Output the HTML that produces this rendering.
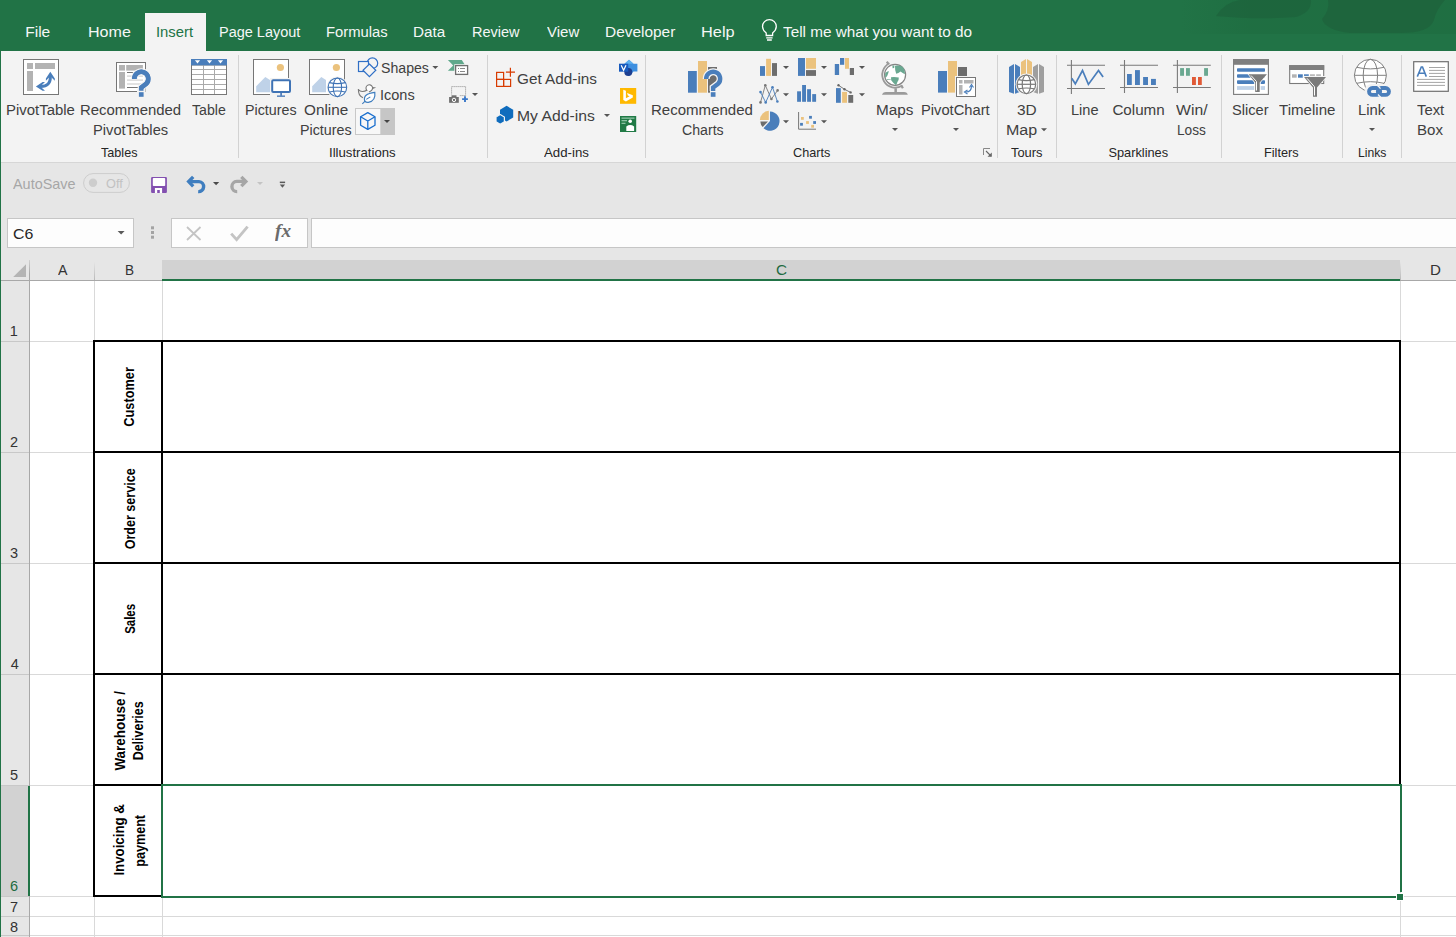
<!DOCTYPE html>
<html><head><meta charset="utf-8"><style>
html,body{margin:0;padding:0}
body{width:1456px;height:937px;overflow:hidden;position:relative;background:#fff;font-family:"Liberation Sans",sans-serif}
.t{position:absolute;white-space:nowrap;line-height:1;transform-origin:0 0}
</style></head><body>
<div style="position:absolute;left:0px;top:0px;width:1456px;height:51px;background:#217346;"></div>
<div style="position:absolute;left:0px;top:51px;width:1456px;height:111px;background:#f3f3f3;"></div>
<div style="position:absolute;left:0px;top:162px;width:1456px;height:1px;background:#d6d6d6;"></div>
<div style="position:absolute;left:0px;top:163px;width:1456px;height:97px;background:#e6e6e6;"></div>
<div style="position:absolute;left:145px;top:13px;width:61px;height:38px;background:#f3f3f3;"></div>
<div style="position:absolute;left:0px;top:260px;width:1456px;height:20px;background:#e6e6e6;"></div>
<div style="position:absolute;left:30px;top:281px;width:1426px;height:656px;background:#ffffff;"></div>
<div style="position:absolute;left:1px;top:281px;width:28px;height:656px;background:#e6e6e6;"></div>
<div style="position:absolute;left:1px;top:786px;width:27px;height:110px;background:#d2d2d2;"></div>
<div style="position:absolute;left:1px;top:341px;width:28px;height:1px;background:#c8c8c8;"></div>
<div style="position:absolute;left:30px;top:341px;width:1426px;height:1px;background:#d9d9d9;"></div>
<div style="position:absolute;left:1px;top:452px;width:28px;height:1px;background:#c8c8c8;"></div>
<div style="position:absolute;left:30px;top:452px;width:1426px;height:1px;background:#d9d9d9;"></div>
<div style="position:absolute;left:1px;top:563px;width:28px;height:1px;background:#c8c8c8;"></div>
<div style="position:absolute;left:30px;top:563px;width:1426px;height:1px;background:#d9d9d9;"></div>
<div style="position:absolute;left:1px;top:674px;width:28px;height:1px;background:#c8c8c8;"></div>
<div style="position:absolute;left:30px;top:674px;width:1426px;height:1px;background:#d9d9d9;"></div>
<div style="position:absolute;left:1px;top:785px;width:28px;height:1px;background:#c8c8c8;"></div>
<div style="position:absolute;left:30px;top:785px;width:1426px;height:1px;background:#d9d9d9;"></div>
<div style="position:absolute;left:1px;top:896px;width:28px;height:1px;background:#c8c8c8;"></div>
<div style="position:absolute;left:30px;top:896px;width:1426px;height:1px;background:#d9d9d9;"></div>
<div style="position:absolute;left:1px;top:916px;width:28px;height:1px;background:#c8c8c8;"></div>
<div style="position:absolute;left:30px;top:916px;width:1426px;height:1px;background:#d9d9d9;"></div>
<div style="position:absolute;left:1px;top:935px;width:28px;height:1px;background:#c8c8c8;"></div>
<div style="position:absolute;left:30px;top:935px;width:1426px;height:1px;background:#d9d9d9;"></div>
<div style="position:absolute;left:94px;top:281px;width:1px;height:656px;background:#d9d9d9;"></div>
<div style="position:absolute;left:162px;top:281px;width:1px;height:656px;background:#d9d9d9;"></div>
<div style="position:absolute;left:1400px;top:281px;width:1px;height:656px;background:#d9d9d9;"></div>
<div style="position:absolute;left:94px;top:262px;width:1px;height:18px;background:linear-gradient(#e6e6e6,#b9b9b9);"></div>
<div style="position:absolute;left:1400px;top:262px;width:1px;height:18px;background:linear-gradient(#e6e6e6,#b9b9b9);"></div>
<div style="position:absolute;left:162px;top:260px;width:1238px;height:19px;background:#d2d2d2;"></div>
<div style="position:absolute;left:162px;top:279px;width:1238px;height:2px;background:#217346;"></div>
<div style="position:absolute;left:29px;top:260px;width:1px;height:677px;background:linear-gradient(#d0d0d0 0px,#a8a8a8 14px,#a8a8a8 100%);"></div>
<div style="position:absolute;left:1px;top:280px;width:161px;height:1px;background:#a8a8a8;"></div>
<div style="position:absolute;left:1400px;top:280px;width:56px;height:1px;background:#a8a8a8;"></div>
<div style="position:absolute;left:28px;top:786px;width:2px;height:110px;background:#217346;"></div>
<div style="position:absolute;left:93px;top:340px;width:1308px;height:2px;background:#000;"></div>
<div style="position:absolute;left:93px;top:451px;width:1308px;height:2px;background:#000;"></div>
<div style="position:absolute;left:93px;top:562px;width:1308px;height:2px;background:#000;"></div>
<div style="position:absolute;left:93px;top:673px;width:1308px;height:2px;background:#000;"></div>
<div style="position:absolute;left:93px;top:784px;width:1308px;height:2px;background:#000;"></div>
<div style="position:absolute;left:93px;top:895px;width:70px;height:2px;background:#000;"></div>
<div style="position:absolute;left:93px;top:340px;width:2px;height:557px;background:#000;"></div>
<div style="position:absolute;left:161px;top:340px;width:2px;height:446px;background:#000;"></div>
<div style="position:absolute;left:1399px;top:340px;width:2px;height:446px;background:#000;"></div>
<div style="position:absolute;left:93px;top:895px;width:70px;height:2px;background:#000;"></div>
<div style="position:absolute;left:161px;top:784px;width:1241px;height:2px;background:#217346;"></div>
<div style="position:absolute;left:161px;top:784px;width:2px;height:114px;background:#217346;"></div>
<div style="position:absolute;left:1400px;top:784px;width:2px;height:108px;background:#217346;"></div>
<div style="position:absolute;left:161px;top:896px;width:1235px;height:2px;background:#217346;"></div>
<div style="position:absolute;left:1396px;top:893px;width:8px;height:8px;background:#ffffff;"></div>
<div style="position:absolute;left:1397px;top:894px;width:6px;height:6px;background:#217346;"></div>
<div style="position:absolute;left:0px;top:51px;width:1px;height:886px;background:#217346;"></div>
<svg style="position:absolute;left:0;top:0" width="1456" height="260"><rect x="238" y="55" width="1" height="103" fill="#d2d2d2"/><rect x="487" y="55" width="1" height="103" fill="#d2d2d2"/><rect x="645" y="55" width="1" height="103" fill="#d2d2d2"/><rect x="997" y="55" width="1" height="103" fill="#d2d2d2"/><rect x="1056" y="55" width="1" height="103" fill="#d2d2d2"/><rect x="1221" y="55" width="1" height="103" fill="#d2d2d2"/><rect x="1342" y="55" width="1" height="103" fill="#d2d2d2"/><rect x="1401" y="55" width="1" height="103" fill="#d2d2d2"/><rect x="23.5" y="59.5" width="35" height="35" fill="#fff" stroke="#767676"/>
<rect x="27" y="63" width="6" height="6" fill="#b3b3b3"/><rect x="35" y="63" width="20" height="6" fill="#b3b3b3"/><rect x="27" y="71" width="6" height="20" fill="#b3b3b3"/>
<path d="M50.3 76 Q51 86.8 40 86.4" fill="none" stroke="#4a7ebb" stroke-width="3"/>
<path d="M45.9 78.5 L50.3 71.8 L54.8 78.5 L54.8 80.8 L50.3 76.3 L45.9 80.8 Z" fill="#4a7ebb"/>
<path d="M42.6 81.9 L35.9 86.4 L42.6 90.8 L45 90.8 L40.3 86.4 L45 81.9 Z" fill="#4a7ebb"/><rect x="116.5" y="62.5" width="29" height="29" fill="#fff" stroke="#767676"/>
<rect x="119" y="65" width="6" height="5.6" fill="#b3b3b3"/><rect x="126.2" y="65" width="16.7" height="5.6" fill="#b3b3b3"/><rect x="119" y="72" width="6" height="16.6" fill="#b3b3b3"/>
<rect x="127" y="72" width="16" height="1" fill="#777"/><rect x="127" y="75.5" width="16" height="1.2" fill="#d0d0d0"/><rect x="127" y="79.5" width="16" height="1.2" fill="#d0d0d0"/><rect x="127" y="83.4" width="16" height="1.2" fill="#d0d0d0"/><rect x="127" y="87" width="11" height="1" fill="#777"/>
<path d="M134.3 79 A7 7 0 1 1 146.2 83.8 L141.2 87.6 L141.2 91" fill="none" stroke="#f3f3f3" stroke-width="7"/>
<path d="M134.3 79 A7 7 0 1 1 146.2 83.8 L141.2 87.6 L141.2 91" fill="none" stroke="#4a7ebb" stroke-width="4.4"/>
<rect x="137" y="89" width="8.6" height="9.8" fill="#f3f3f3"/>
<path d="M134.3 79 A7 7 0 1 1 146.2 83.8 L141.2 87.6 L141.2 90.8" fill="none" stroke="#4a7ebb" stroke-width="4.6"/>
<rect x="138.9" y="92.2" width="4.7" height="4.6" fill="#4a7ebb"/><rect x="191.5" y="65" width="35" height="29.5" fill="#fff" stroke="#777"/>
<g stroke="#aaa" stroke-width="1"><line x1="192" x2="226" y1="69.5" y2="69.5"/><line x1="192" x2="226" y1="74.5" y2="74.5"/><line x1="192" x2="226" y1="79.5" y2="79.5"/><line x1="192" x2="226" y1="84.5" y2="84.5"/><line x1="192" x2="226" y1="89.5" y2="89.5"/><line x1="203.5" x2="203.5" y1="65" y2="94"/><line x1="214.5" x2="214.5" y1="65" y2="94"/></g>
<rect x="191" y="59" width="36" height="6.3" fill="#4a7ebb"/><path d="M194.9 60.3 L200.1 60.3 L197.5 63.5 Z" fill="#fff"/><path d="M206.9 60.3 L212.1 60.3 L209.5 63.5 Z" fill="#fff"/><path d="M217.9 60.3 L223.1 60.3 L220.5 63.5 Z" fill="#fff"/><rect x="253.5" y="59.5" width="35" height="35" fill="#fff" stroke="#767676"/>
<circle cx="280.4" cy="67.5" r="3.6" fill="#ebc27d"/>
<path d="M256.2 92.2 L256.2 86.2 L265.3 77 L270 80 L270 92.2 Z" fill="#bfd2e8"/>
<rect x="270" y="78" width="22" height="19.5" fill="#f3f3f3"/>
<rect x="272.2" y="80.2" width="17.8" height="11.8" rx="1" fill="#fff" stroke="#3f73b5" stroke-width="2"/>
<rect x="280.3" y="93" width="1.6" height="2.8" fill="#3f73b5"/><rect x="277" y="95.5" width="8" height="1.3" fill="#3f73b5"/><rect x="309.5" y="59.5" width="35" height="35" fill="#fff" stroke="#767676"/>
<circle cx="336.4" cy="67.5" r="3.6" fill="#ebc27d"/>
<path d="M312.2 92.2 L312.2 86.2 L321.3 77 L326 80 L326 92.2 Z" fill="#bfd2e8"/><circle cx="337.4" cy="87.3" r="10.8" fill="#f3f3f3"/><circle cx="337.4" cy="87.3" r="9.3" fill="#fff" stroke="#3f73b5" stroke-width="1.1"/><ellipse cx="337.4" cy="87.3" rx="4.1850000000000005" ry="9.3" fill="none" stroke="#3f73b5" stroke-width="1.1"/><line x1="328.09999999999997" x2="346.7" y1="87.3" y2="87.3" stroke="#3f73b5" stroke-width="1.1"/><path d="M329.495 82.64999999999999 Q337.4 84.50999999999999 345.30499999999995 82.64999999999999 M329.495 91.95 Q337.4 90.09 345.30499999999995 91.95" fill="none" stroke="#3f73b5" stroke-width="1.1"/><g fill="none" stroke="#2f6fc6" stroke-width="1.2">
<circle cx="372.4" cy="63.2" r="5.3"/>
<rect x="358.5" y="61.5" width="10" height="10" fill="#f3f3f3"/>
<path d="M369.4 64 L375.8 70.3 L369.4 76.6 L363 70.3 Z" fill="#f3f3f3"/></g><circle cx="369.5" cy="87.8" r="3" fill="#fff"/><g fill="none" stroke="#7a7a7a" stroke-width="1.1" stroke-linecap="round">
<path d="M366.8 90.3 A3.3 3.3 0 1 1 370.4 91.2 L369.4 91.8"/>
<path d="M358.4 89.6 Q360 91.6 362.5 91.5 Q365 91.4 366.8 90.3"/>
<path d="M358.4 89.6 Q358.2 95.6 362.6 97.6"/></g>
<path d="M372.6 87 L376.2 87.4 L372.8 88.9 Z" fill="#7a7a7a"/>
<path d="M364.8 101.2 Q362.4 93.8 374.8 92.3 Q376 100.8 368.3 102.3 Q366.2 102.5 364.8 101.2 Z" fill="#fff" stroke="#3f7ebf" stroke-width="1.2"/>
<path d="M362.3 103.9 L365.4 100.8 M366.3 99.4 L370.3 96.9" stroke="#3f7ebf" stroke-width="1.1"/><rect x="355.5" y="108.5" width="39" height="26" fill="#f7f7f7" stroke="#c8c8c8"/>
<rect x="380.3" y="108" width="14.7" height="27" fill="#c6c6c6"/>
<path d="M384 120 L390 120 L387 123 Z" fill="#444"/>
<g fill="none" stroke="#1a6fce" stroke-width="1.3" stroke-linejoin="round">
<path d="M367.8 112.6 L375 116.8 L375 125.3 L367.8 129.4 L360.6 125.3 L360.6 116.8 Z"/>
<path d="M360.6 116.8 L367.8 121 L375 116.8 M367.8 121 L367.8 129.4"/></g><path d="M447.9 60 L461.8 60 L465 65 L460 70.8 L447.9 70.8 L453.2 65.4 Z" fill="#5fa88b"/>
<rect x="454.3" y="64.2" width="14.5" height="11.5" fill="#f3f3f3"/>
<rect x="455.6" y="65.6" width="12" height="8.8" fill="#fff" stroke="#6f6f6f" stroke-width="1.3"/>
<rect x="458" y="68" width="1" height="1" fill="#888"/><rect x="458" y="71" width="1" height="1" fill="#888"/>
<rect x="460" y="68" width="5" height="1" fill="#888"/><rect x="460" y="71" width="5" height="1" fill="#888"/><rect x="451.6" y="86.6" width="14" height="9" fill="none" stroke="#8a8a8a" stroke-width="1" stroke-dasharray="1 1"/>
<rect x="448.6" y="94.6" width="11" height="9" fill="#f3f3f3"/>
<rect x="449.1" y="97" width="9.7" height="5.8" fill="#6f6f6f"/><rect x="451.5" y="95.3" width="5" height="2" fill="#6f6f6f"/>
<circle cx="454" cy="99.9" r="1.7" fill="none" stroke="#fff" stroke-width="1"/>
<path d="M465 96.2 V102 M462.1 99.1 H467.9" stroke="#3a78c9" stroke-width="1.9"/>
<path d="M472 93 L478 93 L475 96 Z" fill="#555"/>
<path d="M432.3 66 L438.3 66 L435.3 69 Z" fill="#555"/><g fill="none" stroke="#d83b01" stroke-width="1.2">
<rect x="496.6" y="72.4" width="7" height="7"/><rect x="496.6" y="79.4" width="7" height="7"/><rect x="503.6" y="79.4" width="7" height="7"/>
<path d="M510.4 67.8 V76.8 M505.9 72.2 H515"/></g><path d="M506.6 105.8 L513.2 109.7 L513.2 117.5 L506.6 121.4 L500 117.5 L500 109.7 Z" fill="#0f6cbd"/>
<path d="M500.2 114.6 L504.4 117 L504.4 121.8 L500.2 124.2 L496 121.8 L496 117 Z" fill="#0f6cbd" stroke="#f3f3f3" stroke-width="1.2"/>
<path d="M604 114 L610 114 L607 117 Z" fill="#555"/><path d="M629 59.8 L633.5 63.7 L637.4 63.7 L637.4 71.6 L633.5 71.6 L629 76 L624.5 71.6 L624.5 63.7 Z" fill="#3d8fe0"/>
<path d="M629 59.8 L633.5 63.7 L624.5 63.7 Z" fill="#5fb0f0"/>
<circle cx="628.3" cy="72" r="4" fill="#1d3f91"/>
<rect x="619" y="63.7" width="9.2" height="8" fill="#185abd"/>
<path d="M621.2 65.3 L623.6 70.3 L626 65.3" fill="none" stroke="#fff" stroke-width="1.2"/>
<rect x="620" y="88" width="16.2" height="15.8" fill="#ffb900"/>
<path d="M623.3 89.8 L625.9 90.7 L625.9 98.2 L629.6 96.2 L627.9 95.4 L627 92.9 L632.8 95.3 L632.8 97.4 L625.9 101.6 L623.3 100.1 Z" fill="#fff"/>
<rect x="620" y="116" width="16.2" height="16" fill="#217a46"/>
<rect x="621.5" y="117.5" width="13" height="1.3" fill="#8cc2a3"/><rect x="621.5" y="120" width="5.5" height="1.3" fill="#8cc2a3"/><rect x="621.5" y="122.7" width="4" height="1.3" fill="#8cc2a3"/>
<circle cx="630.2" cy="121.2" r="1.8" fill="#fff"/>
<path d="M626.3 131 L626.3 126.5 Q630.2 123.6 634.1 126.5 L634.1 131 Z" fill="#fff"/><rect x="688" y="71" width="8.8" height="21.7" fill="#4a7ebb"/>
<rect x="698" y="61" width="9" height="31.7" fill="#ebc27d"/>
<rect x="708" y="67" width="9" height="25.7" fill="#6d6d6d"/>
<path d="M706.2 79 A7 7 0 1 1 718.1 83.8 L713.1 87.6 L713.1 91" fill="none" stroke="#f3f3f3" stroke-width="7"/>
<rect x="710" y="89" width="7.5" height="9.5" fill="#f3f3f3"/>
<path d="M706.2 79 A7 7 0 1 1 718.1 83.8 L713.1 87.6 L713.1 91" fill="none" stroke="#4a7ebb" stroke-width="4.4"/>
<rect x="710.8" y="92.2" width="4.7" height="4.6" fill="#4a7ebb"/><rect x="760" y="66.1" width="5" height="9.8" fill="#4a7ebb"/><rect x="766.1" y="58.8" width="4.9" height="17.1" fill="#ebc27d"/><rect x="772" y="63.1" width="5" height="12.8" fill="#6d6d6d"/>
<rect x="798" y="58" width="7" height="17.9" fill="#4a7ebb"/><rect x="806" y="58" width="10" height="10.8" fill="#ebc27d"/><rect x="806" y="70.1" width="10" height="5.8" fill="#6d6d6d"/>
<rect x="834.8" y="64" width="4.3" height="11" fill="#4a7ebb"/><rect x="840" y="58" width="4.2" height="6.8" fill="#4a7ebb"/><rect x="845" y="58" width="4" height="10.8" fill="#ebc27d"/><rect x="849.8" y="68" width="4.2" height="7" fill="#6d6d6d"/>
<polyline points="760.5,102.4 765.3,85.3 771.4,99 777.6,90.4" fill="none" stroke="#777" stroke-width="0.9"/>
<polyline points="760.5,92.1 765.7,102.4 772.5,87.3 777.4,101.5" fill="none" stroke="#4a7ebb" stroke-width="0.9"/>
<g fill="#777"><circle cx="760.5" cy="102.4" r="1.3"/><circle cx="765.3" cy="85.3" r="1.3"/><circle cx="771.4" cy="99" r="1.3"/><circle cx="777.6" cy="90.4" r="1.3"/></g>
<g fill="#4a7ebb"><circle cx="760.5" cy="92.1" r="1.3"/><circle cx="765.7" cy="102.4" r="1.3"/><circle cx="772.5" cy="87.3" r="1.3"/><circle cx="777.4" cy="101.5" r="1.3"/></g>
<rect x="797.1" y="91.3" width="3.9" height="10.5" fill="#4a7ebb"/><rect x="802.1" y="85" width="3.9" height="16.8" fill="#4a7ebb"/><rect x="807.1" y="89.2" width="3.9" height="12.6" fill="#4a7ebb"/><rect x="812.2" y="94.1" width="3.9" height="7.7" fill="#4a7ebb"/>
<rect x="836" y="88.1" width="4.8" height="14.7" fill="#4a7ebb"/><rect x="842.1" y="91.9" width="4.9" height="10.9" fill="#ebc27d"/><rect x="848.3" y="95" width="4.9" height="7.8" fill="#6d6d6d"/>
<polyline points="838.5,85.3 844.5,89.3 850.6,92.4" fill="none" stroke="#666" stroke-width="0.9"/>
<g fill="#666"><circle cx="838.5" cy="85.3" r="1.2"/><circle cx="844.5" cy="89.3" r="1.2"/><circle cx="850.6" cy="92.4" r="1.2"/></g>
<path d="M770 121 L770 111.6 A9.6 9.6 0 1 1 763.5 128.3 Z" fill="#4a7ebb"/>
<path d="M768.8 120 L759.9 120 A9.3 9.3 0 0 1 768.8 110.8 Z" fill="#ebc27d"/>
<path d="M768 121.5 L760.3 121.5 A9.3 9.3 0 0 0 762.7 127.1 Z" fill="#6d6d6d"/>
<path d="M798.6 112 V129.2 H816" fill="none" stroke="#777" stroke-width="1"/>
<rect x="801" y="117" width="2.8" height="2.8" fill="#ebc27d"/><rect x="809.1" y="115.9" width="2.8" height="2.8" fill="#4a7ebb"/><rect x="806.1" y="121.1" width="2.8" height="2.8" fill="#ebc27d"/>
<rect x="800.1" y="122.9" width="2.8" height="2.8" fill="#4a7ebb"/><rect x="813.2" y="121.1" width="2.8" height="2.8" fill="#4a7ebb"/><rect x="811.2" y="124.9" width="2.8" height="2.8" fill="#ebc27d"/>
<path d="M783 66 L789 66 L786 69 Z" fill="#555"/><path d="M821 66 L827 66 L824 69 Z" fill="#555"/><path d="M859 66 L865 66 L862 69 Z" fill="#555"/><path d="M783 93.3 L789 93.3 L786 96.3 Z" fill="#555"/><path d="M821 93.3 L827 93.3 L824 96.3 Z" fill="#555"/><path d="M859 93.3 L865 93.3 L862 96.3 Z" fill="#555"/><path d="M783 120.2 L789 120.2 L786 123.2 Z" fill="#555"/><path d="M821 120.2 L827 120.2 L824 123.2 Z" fill="#555"/><path d="M889.49 63.30 A12.8 12.8 0 1 0 902.26 85.41" fill="none" stroke="#9a9a9a" stroke-width="1.8"/>
<path d="M888.48 64.20 L886.83 61.57 M901.35 85.63 L902.90 88.31" stroke="#9a9a9a" stroke-width="2.2"/>
<circle cx="895.1" cy="74.8" r="10.5" fill="#fff" stroke="#858585" stroke-width="1.2"/>
<g fill="#6aa891">
<path d="M895 65.8 Q899 64.6 902.5 66.8 Q905.3 70 904.8 74.3 Q902.8 73 900.5 71.5 Q898.5 73.5 896.2 73.8 Q894.8 71 895 65.8 Z"/>
<path d="M892.4 65.6 L894.4 65.4 L894.2 68 L892.6 68.2 Z"/>
<path d="M888.8 71 Q886 71.5 885.2 73.5 L885.2 77.8 Q887.8 76.5 888.8 71 Z"/>
<path d="M891 77.2 Q895 76.6 898.8 77.6 Q899 80.5 897.4 82 Q896.6 84.6 896 85.2 Q893.2 83 891.2 80.2 Z"/>
<path d="M886.8 79 L890.8 79.2 L890.8 79.8 L886.8 79.8 Z"/>
</g>
<rect x="894.4" y="88.2" width="2.5" height="4" fill="#9a9a9a"/>
<path d="M882 94.8 Q882.6 91.9 886 91.9 L904 91.9 Q907.4 91.9 907.8 94.8 Z" fill="#9a9a9a"/>
<path d="M892 128 L898 128 L895 131 Z" fill="#555"/><path d="M953 128 L959 128 L956 131 Z" fill="#555"/><path d="M1041 128.3 L1047 128.3 L1044 131.3 Z" fill="#555"/><path d="M1369 128 L1375 128 L1372 131 Z" fill="#555"/><rect x="938" y="71" width="9" height="21.6" fill="#4a7ebb"/><rect x="948" y="61" width="9" height="31.6" fill="#ebc27d"/><rect x="958" y="67" width="9" height="12" fill="#6d6d6d"/>
<rect x="955" y="76" width="22" height="22" fill="#f3f3f3"/>
<rect x="956.5" y="77.5" width="19" height="19" fill="#fff" stroke="#767676"/>
<rect x="959" y="80" width="3.5" height="3.5" fill="#b3b3b3"/><rect x="964" y="80" width="9.5" height="3.5" fill="#b3b3b3"/><rect x="959" y="85" width="3.5" height="9.5" fill="#b3b3b3"/>
<path d="M971.5 86 Q971.5 92 966 92" fill="none" stroke="#4a7ebb" stroke-width="1.2"/>
<path d="M969.5 87.5 L971.5 84.5 L973.5 87.5 M967.5 90 L964.5 92 L967.5 94" fill="none" stroke="#4a7ebb" stroke-width="1.2"/><path d="M1009 67 L1014 64 L1014 93.7 L1009 92 Z M1015 64 L1020 67 L1020 92 L1015 93.7 Z" fill="#4a7ebb"/>
<path d="M1021 62 L1026 59 L1026 76 L1021 76 Z M1027 59 L1032 62 L1032 76 L1027 76 Z" fill="#ebc27d"/>
<path d="M1033 67 L1038 64 L1038 93.7 L1033 92 Z M1039 64 L1044 67 L1044 92 L1039 93.7 Z" fill="#9f9f9f"/><circle cx="1026.4" cy="84.3" r="10.8" fill="#f3f3f3"/><circle cx="1026.4" cy="84.3" r="9.3" fill="#fff" stroke="#7a7a7a" stroke-width="1.2"/><ellipse cx="1026.4" cy="84.3" rx="4.1850000000000005" ry="9.3" fill="none" stroke="#7a7a7a" stroke-width="1.2"/><line x1="1017.1000000000001" x2="1035.7" y1="84.3" y2="84.3" stroke="#7a7a7a" stroke-width="1.2"/><path d="M1018.4950000000001 79.64999999999999 Q1026.4 81.50999999999999 1034.305 79.64999999999999 M1018.4950000000001 88.95 Q1026.4 87.09 1034.305 88.95" fill="none" stroke="#7a7a7a" stroke-width="1.2"/><path d="M983.5 155 V148.5 H990" fill="none" stroke="#888" stroke-width="1"/><path d="M986 151 L991 156" stroke="#666" stroke-width="1.1"/><path d="M991.8 152.5 V156.8 H987.5 Z" fill="#666"/><g fill="none" stroke="#7a7a7a" stroke-width="1.1">
<path d="M1071.4 60 V94 M1067 65.3 H1105 M1067 88.5 H1105"/>
<path d="M1124.5 60 V93 M1120 65.3 H1158 M1120 87.5 H1158"/>
<path d="M1177.4 60 V93 M1173 65.3 H1210.8 M1173 87.5 H1210.8"/></g>
<polyline points="1071.7,78.2 1075.3,83.8 1082.5,70.5 1088.4,84.4 1098.5,70.5 1103.1,77.1" fill="none" stroke="#4a7ebb" stroke-width="1.7"/>
<rect x="1127" y="74" width="4.8" height="11" fill="#4a7ebb"/><rect x="1135" y="70.1" width="4.9" height="14.9" fill="#4a7ebb"/><rect x="1143.1" y="77" width="4.9" height="8" fill="#4a7ebb"/><rect x="1151" y="78.9" width="4.9" height="6.1" fill="#4a7ebb"/>
<g fill="#6aa891"><rect x="1180.1" y="68.1" width="3.9" height="7.7"/><rect x="1186" y="68.1" width="3.9" height="7.7"/><rect x="1204.1" y="68.1" width="3.9" height="7.7"/></g>
<g fill="#e05a36"><rect x="1192" y="77" width="3.9" height="8"/><rect x="1198" y="77" width="3.8" height="8"/></g><rect x="1233.6" y="59.6" width="34.8" height="34.8" fill="#fff" stroke="#7a7a7a" stroke-width="1.1"/>
<rect x="1233" y="59.2" width="36" height="5.6" fill="#7f7f7f"/>
<rect x="1237" y="68.2" width="28" height="3.6" rx="0.8" fill="#4a7ebb"/><rect x="1237" y="74.3" width="28" height="3.5" rx="0.8" fill="#4a7ebb"/><rect x="1237" y="80.3" width="28" height="3.6" rx="0.8" fill="#4a7ebb"/><rect x="1237" y="86.1" width="28" height="3.8" fill="#bfd2e8"/>
<path d="M1247 73.3 L1268 73.3 L1260.7 82.6 L1260.7 92.9 L1254.2 92.9 L1254.2 82.6 Z" fill="#fff"/>
<path d="M1248.5 74.3 L1266.9 74.3 L1259.7 82.6 L1259.7 91.9 L1255.2 91.9 L1255.2 82.6 Z" fill="#7a7a7a"/>
<path d="M1251 75.5 L1256.5 81.5 L1256.5 90.5" fill="none" stroke="#fff" stroke-width="1"/><rect x="1289.7" y="65.7" width="34" height="17.8" fill="#fff" stroke="#7a7a7a" stroke-width="1.1"/>
<rect x="1289.2" y="65.2" width="35" height="4.8" fill="#7f7f7f"/>
<rect x="1292" y="74.3" width="4.7" height="3.4" fill="#b3b3b3"/><rect x="1298" y="74.3" width="4.8" height="3.4" fill="#4a7ebb"/><rect x="1304" y="74.3" width="4.8" height="1.6" fill="#4a7ebb"/><rect x="1310" y="74.3" width="4.9" height="1.6" fill="#b3b3b3"/><rect x="1316.2" y="74.3" width="4.7" height="1.6" fill="#b3b3b3"/>
<path d="M1302.6 76 L1327.5 76 L1318 87.5 L1318 97.7 L1312 97.7 L1312 87.5 Z" fill="#f3f3f3"/>
<path d="M1304.1 77 L1326 77 L1317 87.5 L1317 96.7 L1313 96.7 L1313 87.5 Z" fill="#7a7a7a"/>
<path d="M1307 78.3 L1314.5 86.8 L1314.5 95.5" fill="none" stroke="#fff" stroke-width="1"/><circle cx="1370.4" cy="75.3" r="16" fill="#fff" stroke="#808080" stroke-width="1.0"/><ellipse cx="1370.4" cy="75.3" rx="7.2" ry="16" fill="none" stroke="#808080" stroke-width="1.0"/><line x1="1354.4" x2="1386.4" y1="75.3" y2="75.3" stroke="#808080" stroke-width="1.0"/><path d="M1356.8000000000002 67.3 Q1370.4 70.5 1384.0 67.3 M1356.8000000000002 83.3 Q1370.4 80.1 1384.0 83.3" fill="none" stroke="#808080" stroke-width="1.0"/>
<rect x="1364.5" y="84" width="29.5" height="14.5" rx="7" fill="#f3f3f3"/>
<g fill="none" stroke="#4a7ebb" stroke-width="3.8">
<rect x="1369" y="88" width="11.2" height="6.9" rx="3.45"/>
<rect x="1377.8" y="88" width="11.2" height="6.9" rx="3.45"/></g>
<path d="M1377.5 85.2 L1380.5 88.6 M1378 94.5 L1381 97.8" stroke="#f3f3f3" stroke-width="1.3"/><rect x="1413.7" y="61.7" width="34.6" height="29.6" fill="#fff" stroke="#6f6f6f" stroke-width="1.2"/>
<path d="M1417.3 76.6 L1421.3 67 L1422.5 67 L1426.3 76.6 M1418.9 73.2 H1424.6" fill="none" stroke="#4a7ebb" stroke-width="1.6"/>
<g stroke="#9a9a9a" stroke-width="0.9"><path d="M1429 67.5 H1445 M1429 70.4 H1445 M1429 73.4 H1445 M1429 76.5 H1445 M1417 79.4 H1445 M1417 82.4 H1445 M1417 85.4 H1445"/></g><rect x="83.6" y="173.6" width="45.8" height="18.8" rx="9.4" fill="none" stroke="#cdcdcd" stroke-width="1"/>
<circle cx="93" cy="182.8" r="4.2" fill="#cdcdcd"/>
<rect x="151.1" y="176.9" width="15.8" height="16" rx="1" fill="#8350b0"/>
<rect x="152.8" y="178" width="12.4" height="8" rx="0.8" fill="#fff"/>
<path d="M154.9 192.9 V188 H162.1 V192.9 H159.8 V190 H157.2 V192.9 Z" fill="#fff"/>
<path d="M198.2 191.6 A5 5 0 0 0 199 181.6 H190" fill="none" stroke="#3f7ebf" stroke-width="3.4"/>
<path d="M193.2 176.8 L188.6 181.6 L193.2 186.4" fill="none" stroke="#3f7ebf" stroke-width="3.3" stroke-linejoin="miter"/>
<path d="M213 182 L219.2 182 L216.1 185.3 Z" fill="#4a4a4a"/>
<path d="M237.2 191.6 A5 5 0 0 1 236.8 181.4 H245" fill="none" stroke="#a6a6a6" stroke-width="3.4"/>
<path d="M241.3 176.8 L245.9 181.4 L241.3 186.2" fill="none" stroke="#a6a6a6" stroke-width="3.3" stroke-linejoin="miter"/>
<path d="M257 182 L263 182 L260 185 Z" fill="#c4c4c4"/>
<rect x="279.8" y="181.6" width="5.3" height="1.5" fill="#5a5a5a"/>
<path d="M279.8 184.6 L285.1 184.6 L282.45 187.8 Z" fill="#5a5a5a"/><rect x="7.5" y="218.5" width="126" height="29" fill="#fdfdfd" stroke="#c6c6c6"/>
<path d="M117.6 231 L124.6 231 L121.1 234.6 Z" fill="#5a5a5a"/>
<rect x="151" y="226.3" width="3" height="3" fill="#a3a3a3"/><rect x="151" y="231" width="3" height="3" fill="#a3a3a3"/><rect x="151" y="235.7" width="3" height="3" fill="#a3a3a3"/>
<rect x="171.5" y="218.5" width="136" height="29" fill="#fdfdfd" stroke="#c6c6c6"/>
<path d="M187 227 L200.5 240 M200.5 227 L187 240" stroke="#c4c4c4" stroke-width="1.8"/>
<path d="M231.2 233.6 L236.6 239.6 L247.6 226.6" fill="none" stroke="#c4c4c4" stroke-width="2.9"/>
<rect x="311.5" y="218.5" width="1150" height="29" fill="#fdfdfd" stroke="#c6c6c6"/></svg>
<svg style="position:absolute;left:0;top:0" width="1456" height="51">
<defs><linearGradient id="tx" x1="0" x2="1" y1="0" y2="0"><stop offset="0" stop-color="#1d6a3e" stop-opacity="0"/><stop offset="0.25" stop-color="#1d6a3e" stop-opacity="0.5"/><stop offset="1" stop-color="#1d6a3e" stop-opacity="0.5"/></linearGradient></defs>
<rect x="1180" y="0" width="276" height="34" fill="url(#tx)"/>
<path d="M1216 16 Q1225 2 1240 0 L1311 0 Q1312 12 1296 17 Q1260 20 1216 16 Z" fill="#1e633c" opacity="0.75"/>
<path d="M1322 19 Q1330 10 1328 0 L1445 0 Q1436 10 1434 20 Q1430 33 1400 33 L1350 33 Q1325 30 1322 19 Z" fill="#1e633c" opacity="0.8"/>
<g fill="none" stroke="#ffffff" stroke-width="1.3">
<path d="M766.2 35.5 L766.2 33 Q762.5 30 762.5 26.5 A6.9 6.9 0 0 1 776.3 26.5 Q776.3 30 772.6 33 L772.6 35.5 Z"/>
<path d="M766.2 37.8 H772.6 M767 40 H771.8"/>
</g>
</svg>
<div class="t" style="left:25.27px;top:24.00px;font-size:15.5px;color:#f5f7f6;">File</div>
<div class="t" style="left:87.73px;top:24.00px;font-size:15.5px;color:#f5f7f6;transform:scaleX(1.0370);">Home</div>
<div class="t" style="left:219.05px;top:24.00px;font-size:15.5px;color:#f5f7f6;transform:scaleX(0.9339);">Page Layout</div>
<div class="t" style="left:325.83px;top:24.00px;font-size:15.5px;color:#f5f7f6;transform:scaleX(0.9554);">Formulas</div>
<div class="t" style="left:412.77px;top:24.00px;font-size:15.5px;color:#f5f7f6;transform:scaleX(0.9853);">Data</div>
<div class="t" style="left:472.24px;top:24.00px;font-size:15.5px;color:#f5f7f6;transform:scaleX(0.9359);">Review</div>
<div class="t" style="left:546.73px;top:24.00px;font-size:15.5px;color:#f5f7f6;transform:scaleX(0.9684);">View</div>
<div class="t" style="left:604.78px;top:24.00px;font-size:15.5px;color:#f5f7f6;transform:scaleX(0.9956);">Developer</div>
<div class="t" style="left:700.71px;top:24.00px;font-size:15.5px;color:#f5f7f6;transform:scaleX(1.0538);">Help</div>
<div class="t" style="left:783.18px;top:24.00px;font-size:15.5px;color:#f5f7f6;transform:scaleX(0.9884);">Tell me what you want to do</div>
<div class="t" style="left:156.14px;top:24.00px;font-size:15.5px;color:#217346;transform:scaleX(0.9564);">Insert</div>
<div class="t" style="left:6.19px;top:102.00px;font-size:15.2px;color:#404040;transform:scaleX(0.9833);">PivotTable</div>
<div class="t" style="left:79.60px;top:102.00px;font-size:15.2px;color:#404040;transform:scaleX(0.9819);">Recommended</div>
<div class="t" style="left:93.21px;top:122.00px;font-size:15.2px;color:#404040;transform:scaleX(0.9677);">PivotTables</div>
<div class="t" style="left:191.69px;top:102.00px;font-size:15.2px;color:#404040;transform:scaleX(0.9308);">Table</div>
<div class="t" style="left:244.56px;top:102.00px;font-size:15.2px;color:#404040;transform:scaleX(0.9402);">Pictures</div>
<div class="t" style="left:304.32px;top:102.00px;font-size:15.2px;color:#404040;transform:scaleX(1.0063);">Online</div>
<div class="t" style="left:300.36px;top:122.00px;font-size:15.2px;color:#404040;transform:scaleX(0.9402);">Pictures</div>
<div class="t" style="left:380.61px;top:60.00px;font-size:15.2px;color:#404040;transform:scaleX(0.9298);">Shapes</div>
<div class="t" style="left:380.39px;top:87.00px;font-size:15.2px;color:#404040;transform:scaleX(0.9561);">Icons</div>
<div class="t" style="left:517.10px;top:71.00px;font-size:15.2px;color:#404040;transform:scaleX(1.0077);">Get Add-ins</div>
<div class="t" style="left:516.75px;top:108.00px;font-size:15.2px;color:#404040;transform:scaleX(1.0350);">My Add-ins</div>
<div class="t" style="left:651.40px;top:102.00px;font-size:15.2px;color:#404040;transform:scaleX(0.9897);">Recommended</div>
<div class="t" style="left:681.52px;top:122.00px;font-size:15.2px;color:#404040;transform:scaleX(0.9311);">Charts</div>
<div class="t" style="left:876.16px;top:102.00px;font-size:15.2px;color:#404040;transform:scaleX(1.0070);">Maps</div>
<div class="t" style="left:921.22px;top:102.00px;font-size:15.2px;color:#404040;transform:scaleX(0.9683);">PivotChart</div>
<div class="t" style="left:1016.55px;top:102.00px;font-size:15.2px;color:#404040;transform:scaleX(1.0153);">3D</div>
<div class="t" style="left:1006.11px;top:122.00px;font-size:15.2px;color:#404040;transform:scaleX(1.0563);">Map</div>
<div class="t" style="left:1071.33px;top:102.00px;font-size:15.2px;color:#404040;transform:scaleX(0.9619);">Line</div>
<div class="t" style="left:1112.38px;top:102.00px;font-size:15.2px;color:#404040;">Column</div>
<div class="t" style="left:1176.37px;top:102.00px;font-size:15.2px;color:#404040;transform:scaleX(1.0382);">Win/</div>
<div class="t" style="left:1177.47px;top:122.00px;font-size:15.2px;color:#404040;transform:scaleX(0.8980);">Loss</div>
<div class="t" style="left:1232.20px;top:102.00px;font-size:15.2px;color:#404040;transform:scaleX(0.9632);">Slicer</div>
<div class="t" style="left:1278.88px;top:102.00px;font-size:15.2px;color:#404040;transform:scaleX(0.9925);">Timeline</div>
<div class="t" style="left:1358.21px;top:102.00px;font-size:15.2px;color:#404040;transform:scaleX(0.9774);">Link</div>
<div class="t" style="left:1416.58px;top:102.00px;font-size:15.2px;color:#404040;transform:scaleX(0.9771);">Text</div>
<div class="t" style="left:1417.29px;top:122.00px;font-size:15.2px;color:#404040;transform:scaleX(0.9918);">Box</div>
<div class="t" style="left:101.45px;top:147.00px;font-size:12.8px;color:#262626;transform:scaleX(0.9853);">Tables</div>
<div class="t" style="left:329.28px;top:147.00px;font-size:12.8px;color:#262626;transform:scaleX(1.0301);">Illustrations</div>
<div class="t" style="left:543.96px;top:147.00px;font-size:12.8px;color:#262626;transform:scaleX(1.0363);">Add-ins</div>
<div class="t" style="left:792.64px;top:147.00px;font-size:12.8px;color:#262626;transform:scaleX(0.9897);">Charts</div>
<div class="t" style="left:1011.06px;top:147.00px;font-size:12.8px;color:#262626;transform:scaleX(1.0065);">Tours</div>
<div class="t" style="left:1108.40px;top:147.00px;font-size:12.8px;color:#262626;">Sparklines</div>
<div class="t" style="left:1264.35px;top:147.00px;font-size:12.8px;color:#262626;transform:scaleX(0.9941);">Filters</div>
<div class="t" style="left:1357.57px;top:147.00px;font-size:12.8px;color:#262626;transform:scaleX(0.9524);">Links</div>
<div class="t" style="left:13.17px;top:177.00px;font-size:14.6px;color:#a6a6a6;transform:scaleX(0.9884);">AutoSave</div>
<div class="t" style="left:106.00px;top:178.00px;font-size:12px;color:#c2c2c2;transform:scaleX(1.0584);">Off</div>
<div class="t" style="left:13.43px;top:227.00px;font-size:14.6px;color:#262626;transform:scaleX(1.0921);">C6</div>
<div class="t" style="left:57.66px;top:263.00px;font-size:14px;color:#333333;transform:scaleX(1.0137);">A</div>
<div class="t" style="left:124.51px;top:263.00px;font-size:14px;color:#333333;transform:scaleX(0.9662);">B</div>
<div class="t" style="left:776.19px;top:263.00px;font-size:14px;color:#1e6b41;transform:scaleX(1.0944);">C</div>
<div class="t" style="left:1429.63px;top:263.00px;font-size:14px;color:#333333;transform:scaleX(1.0786);">D</div>
<svg style="position:absolute;left:0;top:260px" width="29" height="20"><path d="M13.2 17 L26 17 L26 4.3 Z" fill="#b4b4b4"/></svg>
<div class="t" style="left:9.84px;top:324.00px;font-size:14.5px;color:#333;">1</div>
<div class="t" style="left:10.11px;top:435.00px;font-size:14.5px;color:#333;">2</div>
<div class="t" style="left:10.03px;top:546.00px;font-size:14.5px;color:#333;">3</div>
<div class="t" style="left:10.63px;top:657.00px;font-size:14.5px;color:#333;">4</div>
<div class="t" style="left:9.98px;top:768.00px;font-size:14.5px;color:#333;">5</div>
<div class="t" style="left:10.10px;top:879.00px;font-size:14.5px;color:#1e6b41;">6</div>
<div class="t" style="left:10.09px;top:900.00px;font-size:14.5px;color:#333;">7</div>
<div class="t" style="left:10.12px;top:920.00px;font-size:14.5px;color:#333;">8</div>
<div class="t" style="left:100.91px;top:384.75px;font-size:14px;color:#000;font-weight:bold;transform-origin:32.69px 11.85px;transform:rotate(-90deg) scaleX(0.9117);">Customer</div>
<div class="t" style="left:89.78px;top:496.65px;font-size:14px;color:#000;font-weight:bold;transform-origin:45.12px 11.85px;transform:rotate(-90deg) scaleX(0.8975);">Order service</div>
<div class="t" style="left:116.59px;top:606.65px;font-size:14px;color:#000;font-weight:bold;transform-origin:18.31px 11.85px;transform:rotate(-90deg) scaleX(0.8191);">Sales</div>
<div class="t" style="left:82.83px;top:718.65px;font-size:14px;color:#000;font-weight:bold;transform-origin:41.38px 11.85px;transform:rotate(-90deg) scaleX(0.9607);">Warehouse /</div>
<div class="t" style="left:110.34px;top:718.55px;font-size:14px;color:#000;font-weight:bold;transform-origin:33.06px 11.85px;transform:rotate(-90deg) scaleX(0.8922);">Deliveries</div>
<div class="t" style="left:85.75px;top:828.35px;font-size:14px;color:#000;font-weight:bold;transform-origin:37.75px 11.85px;transform:rotate(-90deg) scaleX(0.9470);">Invoicing &amp;</div>
<div class="t" style="left:115.99px;top:829.05px;font-size:14px;color:#000;font-weight:bold;transform-origin:28.81px 11.85px;transform:rotate(-90deg) scaleX(0.8989);">payment</div>
<div class="t" style="left:275.3px;top:222px;font-family:'Liberation Serif',serif;font-style:italic;font-weight:bold;font-size:18px;line-height:19px;color:#6b6b6b;transform:scaleX(1.07)">fx</div>
</body></html>
